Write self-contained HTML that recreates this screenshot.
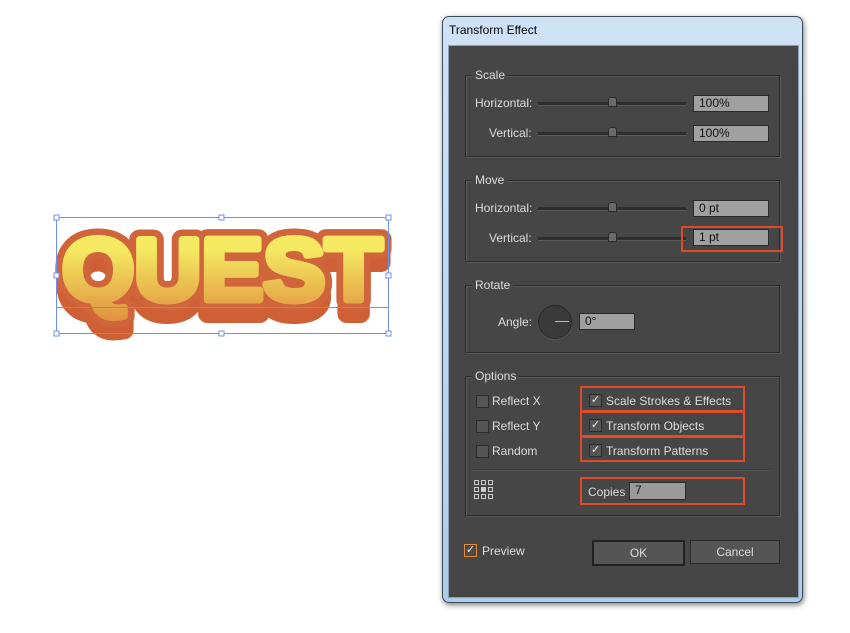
<!DOCTYPE html>
<html><head><style>
body{margin:0;width:850px;height:633px;background:#fff;position:relative;overflow:hidden;font-family:"Liberation Sans",sans-serif;}
.a{position:absolute}
.win{left:442px;top:16px;width:359px;height:585px;border-radius:7px;background:linear-gradient(#cfe2f5,#bcd6ef 60%,#aecbe8);border:1px solid #3b4b5c;box-shadow:1px 2px 6px rgba(0,0,0,.5)}
.title{left:449px;top:23px;font-size:12px;color:#000}
.panel{left:448px;top:45px;width:349px;height:551px;background:#464646;border:1px solid #8aa0b8}
.grp{border:1px solid #2c2c2c;box-shadow:1px 1px 0 #5a5a5a, inset 1px 1px 0 #5a5a5a}
.lg{font-size:12px;color:#ddd;background:#464646;padding:0 3px}
.t{font-size:12px;color:#ddd}
.fld{background:#a0a0a0;border:1px solid #2a2a2a;font-size:12px;color:#111;padding-left:5px;box-sizing:border-box;line-height:15px}
.sl{height:3px;background:#2e2e2e;border-bottom:1px solid #5a5a5a}
.th{width:7px;height:8px;background:#6a6a6a;border:1px solid #2a2a2a;border-radius:3px 3px 0 0}
.cb{width:11px;height:11px;background:#555;border:1px solid #2c2c2c;font-size:11px;color:#eee;line-height:11px;text-align:center}
.red{border:2px solid #e04a2a}
.btn{background:#555;border:1px solid #2a2a2a;font-size:12px;color:#ddd;text-align:center;line-height:22px}
</style></head><body>
<svg class="a" style="left:40px;top:200px" width="370" height="150">
<defs><linearGradient id="g" x1="0" y1="0" x2="0" y2="1"><stop offset="0.3" stop-color="#f5e962"/><stop offset="1" stop-color="#e09440"/></linearGradient></defs>
<g font-family="Liberation Sans" font-weight="bold" font-size="88" stroke-linejoin="round">
<text x="22" y="114" textLength="320" lengthAdjust="spacingAndGlyphs" fill="#cf5f34" stroke="#cf5f34" stroke-width="18">QUEST</text>
<text x="22" y="100" textLength="320" lengthAdjust="spacingAndGlyphs" fill="#cf5f34" stroke="#d0643a" stroke-width="20">QUEST</text>
<text x="22" y="100" textLength="320" lengthAdjust="spacingAndGlyphs" fill="url(#g)" stroke="url(#g)" stroke-width="7">QUEST</text>
</g>
<rect x="16.5" y="17.5" width="332" height="116" fill="none" stroke="#6e8ff0" stroke-width="1"/>
<line x1="16" y1="107.5" x2="348" y2="107.5" stroke="#6e8ff0"/>
<g fill="#fff" stroke="#6e8ff0"><rect x="14" y="15" width="5" height="5"/><rect x="179" y="15" width="5" height="5"/><rect x="346" y="15" width="5" height="5"/><rect x="14" y="73" width="5" height="5"/><rect x="346" y="73" width="5" height="5"/><rect x="14" y="131" width="5" height="5"/><rect x="179" y="131" width="5" height="5"/><rect x="346" y="131" width="5" height="5"/></g>
</svg>
<div class="a win"></div>
<div class="a title">Transform Effect</div>
<div class="a panel"></div>

<div class="a grp" style="left:465px;top:75px;width:313px;height:80px"></div>
<div class="a lg" style="left:472px;top:68px">Scale</div>
<div class="a t" style="left:475px;top:96px">Horizontal:</div>
<div class="a sl" style="left:538px;top:102px;width:148px"></div><div class="a th" style="left:608px;top:97px"></div>
<div class="a fld" style="left:693px;top:95px;width:76px;height:17px">100%</div>
<div class="a t" style="left:489px;top:126px">Vertical:</div>
<div class="a sl" style="left:538px;top:132px;width:148px"></div><div class="a th" style="left:608px;top:127px"></div>
<div class="a fld" style="left:693px;top:125px;width:76px;height:17px">100%</div>

<div class="a grp" style="left:465px;top:180px;width:313px;height:80px"></div>
<div class="a lg" style="left:472px;top:173px">Move</div>
<div class="a t" style="left:475px;top:201px">Horizontal:</div>
<div class="a sl" style="left:538px;top:207px;width:148px"></div><div class="a th" style="left:608px;top:202px"></div>
<div class="a fld" style="left:693px;top:200px;width:76px;height:17px">0 pt</div>
<div class="a t" style="left:489px;top:231px">Vertical:</div>
<div class="a sl" style="left:538px;top:237px;width:148px"></div><div class="a th" style="left:608px;top:232px"></div>
<div class="a fld" style="left:693px;top:229px;width:76px;height:17px">1 pt</div>
<div class="a red" style="left:681px;top:226px;width:98px;height:22px"></div>

<div class="a grp" style="left:465px;top:285px;width:313px;height:66px"></div>
<div class="a lg" style="left:472px;top:278px">Rotate</div>
<div class="a t" style="left:498px;top:315px">Angle:</div>
<div class="a" style="left:538px;top:305px;width:32px;height:32px;border-radius:50%;background:#3a3a3a;border:1px solid #262626;box-shadow:0 1px 0 #5a5a5a"></div>
<div class="a" style="left:555px;top:321px;width:14px;height:1px;background:#bbb"></div>
<div class="a fld" style="left:579px;top:313px;width:56px;height:17px">0°</div>

<div class="a grp" style="left:465px;top:376px;width:313px;height:138px"></div>
<div class="a lg" style="left:472px;top:369px">Options</div>
<div class="a cb" style="left:476px;top:395px"></div><div class="a t" style="left:492px;top:394px">Reflect X</div>
<div class="a cb" style="left:476px;top:420px"></div><div class="a t" style="left:492px;top:419px">Reflect Y</div>
<div class="a cb" style="left:476px;top:445px"></div><div class="a t" style="left:492px;top:444px">Random</div>
<div class="a cb" style="left:589px;top:394px">✓</div><div class="a t" style="left:606px;top:394px">Scale Strokes &amp; Effects</div>
<div class="a cb" style="left:589px;top:419px">✓</div><div class="a t" style="left:606px;top:419px">Transform Objects</div>
<div class="a cb" style="left:589px;top:444px">✓</div><div class="a t" style="left:606px;top:444px">Transform Patterns</div>
<div class="a red" style="left:580px;top:386px;width:161px;height:22px"></div>
<div class="a red" style="left:580px;top:411px;width:161px;height:22px"></div>
<div class="a red" style="left:580px;top:436px;width:161px;height:22px"></div>
<div class="a" style="left:472px;top:469px;width:298px;height:1px;background:#3a3a3a;border-bottom:1px solid #555"></div>
<svg class="a" style="left:474px;top:480px" width="20" height="20"><g fill="none" stroke="#ccc" stroke-width="1"><rect x="0.5" y="0.5" width="4" height="4"/><rect x="7.5" y="0.5" width="4" height="4"/><rect x="14.5" y="0.5" width="4" height="4"/><rect x="0.5" y="7.5" width="4" height="4"/><rect x="14.5" y="7.5" width="4" height="4"/><rect x="0.5" y="14.5" width="4" height="4"/><rect x="7.5" y="14.5" width="4" height="4"/><rect x="14.5" y="14.5" width="4" height="4"/></g><rect x="7" y="7" width="5" height="5" fill="#ccc"/></svg>
<div class="a t" style="left:588px;top:485px">Copies</div>
<div class="a fld" style="left:629px;top:482px;width:57px;height:18px;background:#9a9a9a">7</div>
<div class="a red" style="left:580px;top:477px;width:161px;height:24px"></div>

<div class="a cb" style="left:464px;top:544px;border-color:#e08a30;background:#4a4a4a">✓</div>
<div class="a t" style="left:482px;top:544px">Preview</div>
<div class="a btn" style="left:592px;top:540px;width:89px;height:22px;border:2px solid #222">OK</div>
<div class="a btn" style="left:690px;top:540px;width:88px;height:22px">Cancel</div>
</body></html>
